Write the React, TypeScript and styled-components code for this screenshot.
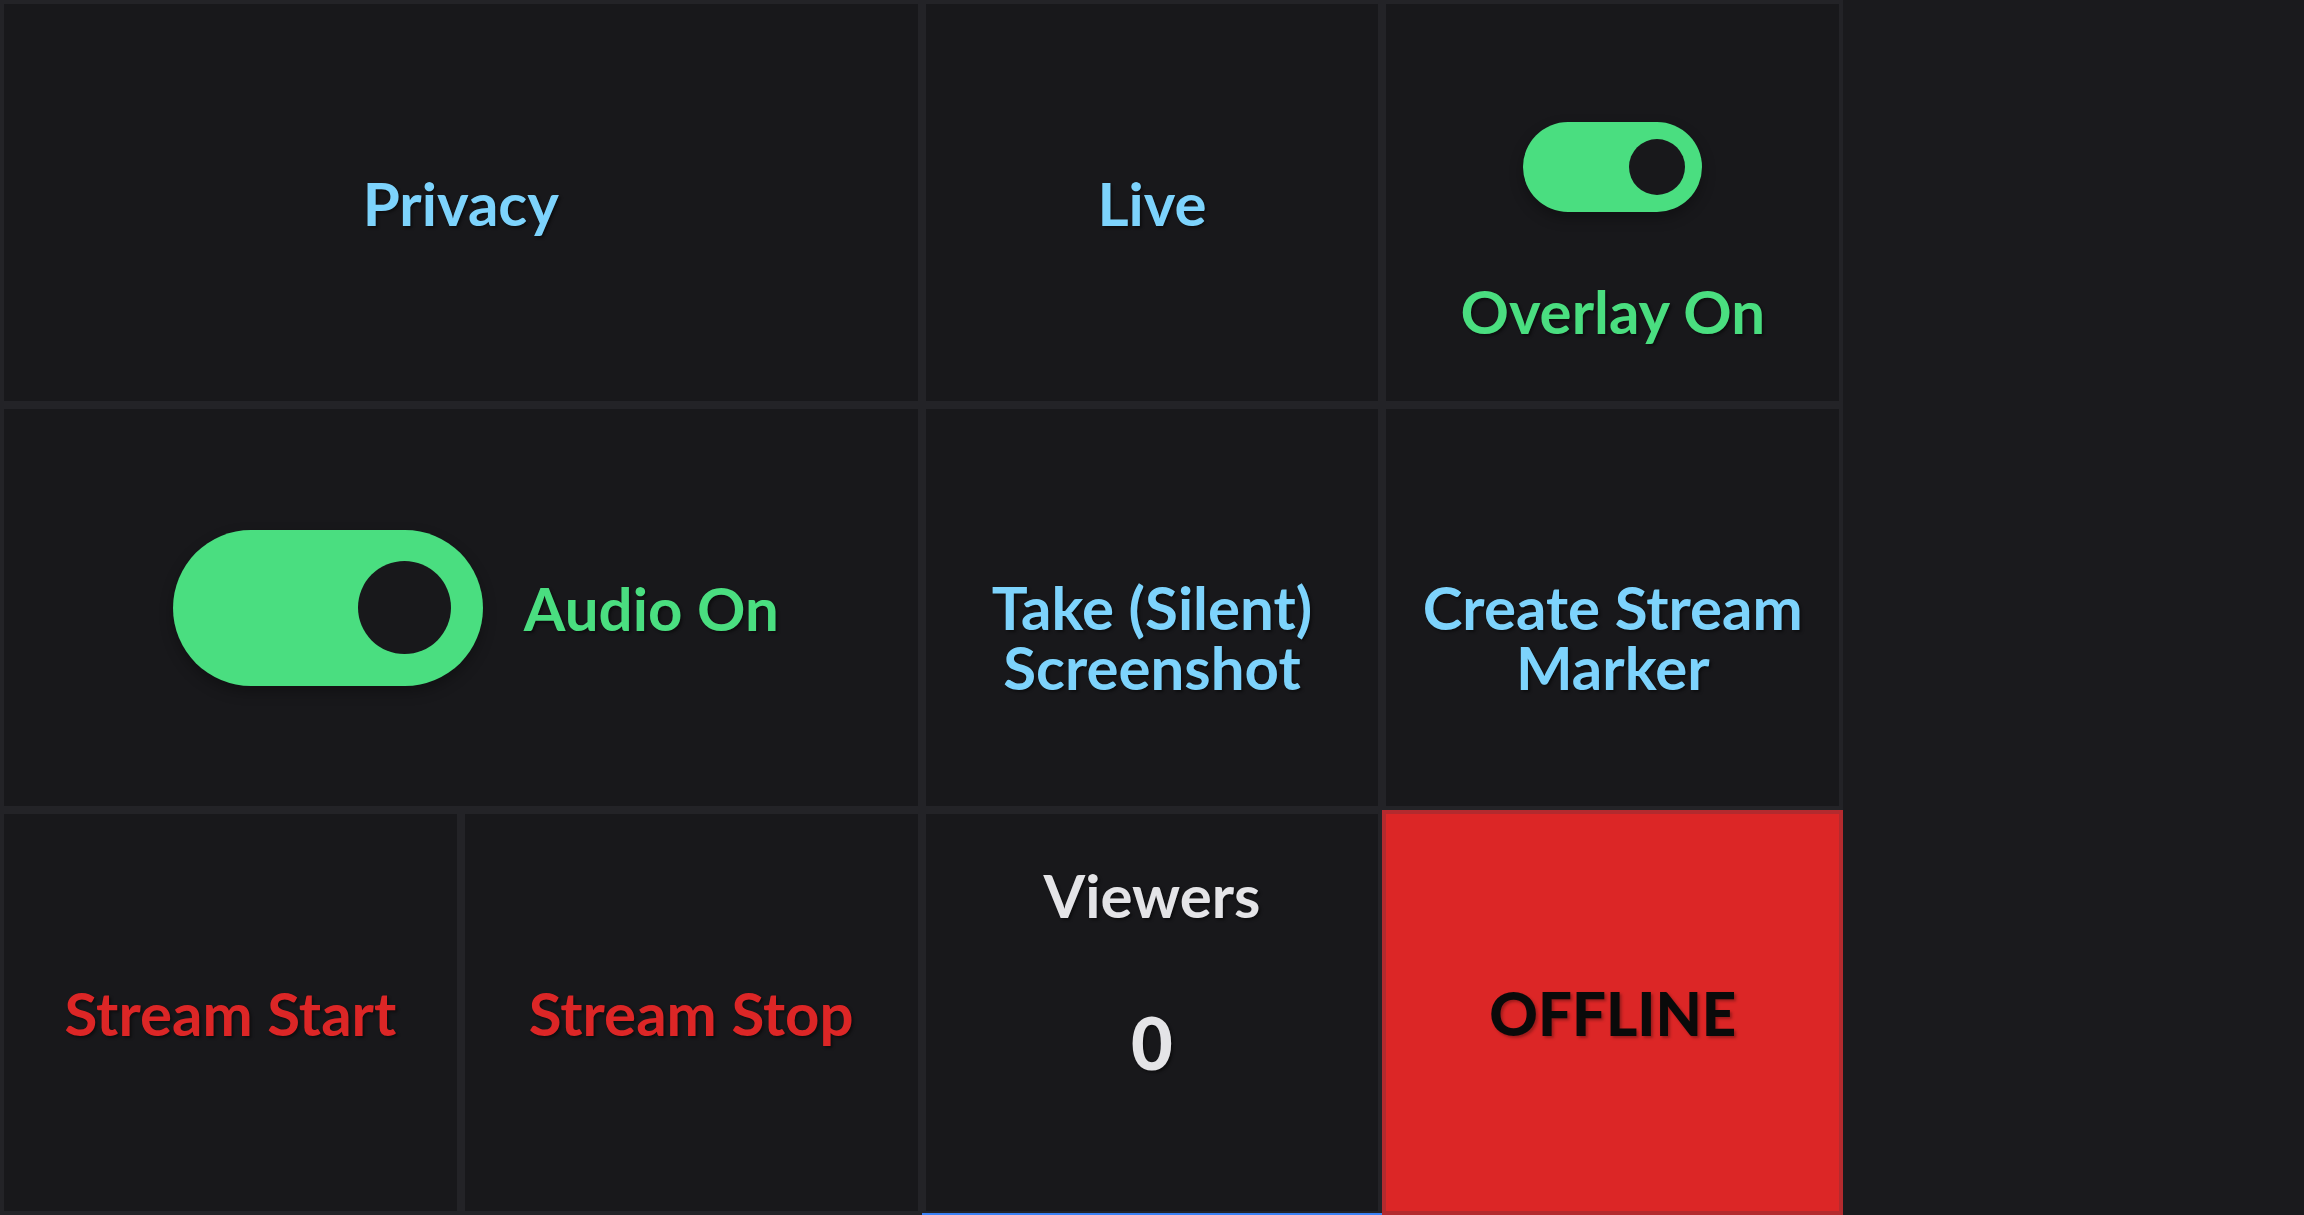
import styled, { createGlobalStyle } from 'styled-components';

const GlobalStyle = createGlobalStyle`
  html, body {
    margin: 0;
    padding: 0;
    background: #1a1a1d;
  }
  body {
    font-family: Lato, 'Noto Sans', 'DejaVu Sans', sans-serif;
    overflow: hidden;
  }
`;

const colors = {
  sky: '#7dd3fc',
  green: '#4ade80',
  red: '#dc2626',
  light: '#e4e4e7',
  ink: '#0a0a0a',
};

type TileProps = {
  $span?: number;
  $alert?: boolean;
  $row?: boolean;
  $top?: number;
  $left?: number;
  $gap?: number;
  $start?: boolean;
  $focus?: boolean;
};

const Board = styled.main`
  display: grid;
  grid-template-columns: repeat(4, 1fr);
  grid-template-rows: repeat(3, 1fr);
  width: 80vw;
  height: 100vh;
`;

const Tile = styled.div<TileProps>`
  grid-column: span ${(p) => p.$span ?? 1};
  position: relative;
  box-sizing: border-box;
  min-width: 0;
  min-height: 0;
  display: flex;
  flex-direction: ${(p) => (p.$row ? 'row' : 'column')};
  align-items: center;
  justify-content: ${(p) => (p.$start ? 'flex-start' : 'center')};
  gap: ${(p) => p.$gap ?? 0}px;
  padding: ${(p) => p.$top ?? 0}px 16px 0 ${(p) => p.$left ?? 16}px;
  background: ${(p) => (p.$alert ? colors.red : '#18181b')};
  border: 4px solid ${(p) => (p.$alert ? '#b42a2e' : '#232327')};
  cursor: pointer;

  ${(p) =>
    p.$focus &&
    `
    &::after {
      content: '';
      position: absolute;
      left: -4px;
      right: -4px;
      bottom: -4px;
      height: 2px;
      background: #3b82f6;
    }
  `}
`;

const Label = styled.span<{ $color: string; $heavy?: boolean }>`
  font-size: 60px;
  line-height: 1;
  font-weight: ${(p) => (p.$heavy ? 900 : 700)};
  color: ${(p) => p.$color};
  text-align: center;
  text-shadow: 2px 2px 3px rgba(0, 0, 0, ${(p) => (p.$heavy ? 0.3 : 0.45)});
`;

const Count = styled.span`
  margin-top: 81px;
  font-size: 72px;
  line-height: 1;
  font-weight: 900;
  color: ${colors.light};
  text-shadow: 2px 2px 3px rgba(0, 0, 0, 0.45);
`;

const sizes = {
  sm: { w: 179, h: 90, knob: 56 },
  lg: { w: 310, h: 156, knob: 93 },
};

const Track = styled.span<{ $size: 'sm' | 'lg' }>`
  flex: none;
  box-sizing: border-box;
  display: flex;
  align-items: center;
  justify-content: flex-end;
  width: ${(p) => sizes[p.$size].w}px;
  height: ${(p) => sizes[p.$size].h}px;
  padding: 0 ${(p) => (sizes[p.$size].h - sizes[p.$size].knob) / 2}px;
  border-radius: 999px;
  background: ${colors.green};
  box-shadow: 0 6px 14px rgba(0, 0, 0, 0.3);
`;

const Knob = styled.span<{ $size: 'sm' | 'lg' }>`
  width: ${(p) => sizes[p.$size].knob}px;
  height: ${(p) => sizes[p.$size].knob}px;
  border-radius: 50%;
  background: #18181b;
`;

const Toggle = ({ size }: { size: 'sm' | 'lg' }) => (
  <Track $size={size} role="switch" aria-checked="true">
    <Knob $size={size} />
  </Track>
);

const App = () => (
  <>
    <GlobalStyle />
    <Board>
      <Tile $span={2}>
        <Label $color={colors.sky}>Privacy</Label>
      </Tile>
      <Tile>
        <Label $color={colors.sky}>Live</Label>
      </Tile>
      <Tile $top={58} $gap={69}>
        <Toggle size="sm" />
        <Label $color={colors.green}>Overlay On</Label>
      </Tile>

      <Tile $span={2} $row $gap={41} $left={46}>
        <Toggle size="lg" />
        <Label $color={colors.green}>Audio On</Label>
      </Tile>
      <Tile $top={58}>
        <Label $color={colors.sky}>Take (Silent) Screenshot</Label>
      </Tile>
      <Tile $top={58}>
        <Label $color={colors.sky}>Create Stream Marker</Label>
      </Tile>

      <Tile>
        <Label $color={colors.red}>Stream Start</Label>
      </Tile>
      <Tile>
        <Label $color={colors.red}>Stream Stop</Label>
      </Tile>
      <Tile $start $top={51} $focus>
        <Label $color={colors.light}>Viewers</Label>
        <Count>0</Count>
      </Tile>
      <Tile $alert>
        <Label $color={colors.ink} $heavy>
          OFFLINE
        </Label>
      </Tile>
    </Board>
  </>
);

export default App;
